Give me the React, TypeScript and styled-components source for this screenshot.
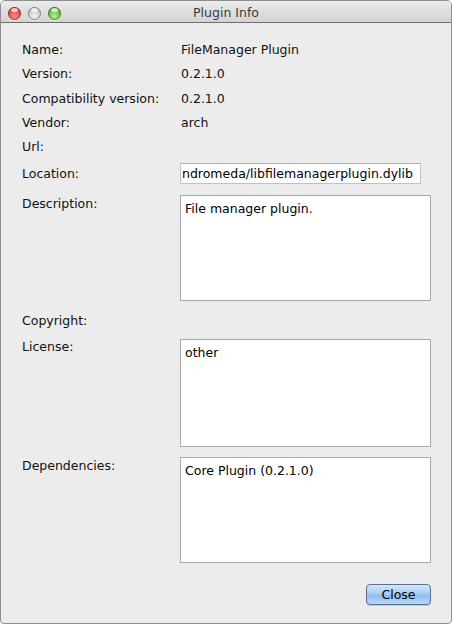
import React from "react";
import styled, { createGlobalStyle } from "styled-components";

const Global = createGlobalStyle`
  html, body { margin: 0; padding: 0; background: #ffffff; }
  body { font-family: "DejaVu Sans", "Liberation Sans", sans-serif; }
  * { box-sizing: border-box; }
`;

const Window = styled.div`
  width: 452px;
  height: 624px;
  border: 1px solid #8e8e8e;
  border-radius: 5px 5px 4px 4px;
  background: #ececec;
  overflow: hidden;
  display: flex;
  flex-direction: column;
`;

const TitleBar = styled.div`
  height: 22px;
  flex: none;
  background: linear-gradient(#ebebeb, #d3d3d3);
  border-bottom: 1px solid #6f6f6f;
  display: flex;
  align-items: center;
  position: relative;
  padding-left: 7px;
  gap: 7px;
`;

const Light = styled.span<{ $c: string; $d: string }>`
  width: 13px;
  height: 13px;
  border-radius: 50%;
  margin-top: 3px;
  background: radial-gradient(circle at 50% 70%, ${(p) => p.$c} 0%, ${(p) => p.$d} 75%);
  box-shadow: inset 0 0 0 1px rgba(0, 0, 0, 0.35), 0 1px 0 rgba(255, 255, 255, 0.6);
  position: relative;
  &::after {
    content: "";
    position: absolute;
    left: 3px;
    top: 1px;
    width: 7px;
    height: 4px;
    border-radius: 50%;
    background: rgba(255, 255, 255, 0.7);
  }
`;

const Title = styled.div`
  position: absolute;
  left: 0;
  right: 0;
  top: 0;
  bottom: 0;
  text-align: center;
  line-height: 24px;
  font-size: 12.5px;
  color: #3a3a3a;
  pointer-events: none;
`;

const Content = styled.div`
  padding: 15px 20px 0 20px;
  display: grid;
  grid-template-columns: 159px 251px;
  align-items: start;
  font-size: 12.5px;
  color: #111;
`;

const Label = styled.div<{ $h?: number; $mt?: number; $lh?: number }>`
  height: ${(p) => p.$h ?? 24.25}px;
  line-height: ${(p) => p.$lh ?? 24.25}px;
  margin-top: ${(p) => p.$mt ?? 0}px;
  padding-left: 1px;
  white-space: nowrap;
`;

const Value = styled.div<{ $mt?: number }>`
  height: 24.25px;
  line-height: 24.25px;
  margin-top: ${(p) => p.$mt ?? 0}px;
  padding-left: 1px;
  white-space: nowrap;
`;

const LineField = styled.div`
  height: 21px;
  width: 241px;
  margin-top: 4px;
  background: #fff;
  border: 1px solid #c2c2c2;
  border-top-color: #b0b0b0;
  line-height: 19px;
  padding-left: 1px;
  overflow: hidden;
  white-space: nowrap;
  color: #000;
`;

const Area = styled.div<{ $h: number; $mt: number }>`
  height: ${(p) => p.$h}px;
  margin-top: ${(p) => p.$mt}px;
  background: #fff;
  border: 1px solid #a9a9a9;
  padding: 4px 4px;
  line-height: 17px;
  color: #000;
`;

const Footer = styled.div`
  display: flex;
  justify-content: flex-end;
  padding: 21px 20px 0 0;
`;

const Button = styled.button`
  width: 65px;
  height: 21px;
  border-radius: 4px;
  border: 1px solid #5a6e93;
  background: linear-gradient(#d4e6f9 0%, #a9cdf4 45%, #8ebdf0 55%, #b7dafc 100%);
  box-shadow: 0 1px 1px rgba(0, 0, 0, 0.15);
  font-family: "DejaVu Sans", "Liberation Sans", sans-serif;
  font-size: 12.5px;
  color: #000;
  padding: 0;
  line-height: 19px;
`;

const simple: [string, string][] = [
  ["Name:", "FileManager Plugin"],
  ["Version:", "0.2.1.0"],
  ["Compatibility version:", "0.2.1.0"],
  ["Vendor:", "arch"],
  ["Url:", ""],
];

export default function App() {
  return (
    <>
      <Global />
      <Window>
        <TitleBar>
          <Light $c="#ff8d87" $d="#d9362e" />
          <Light $c="#f4f4f4" $d="#b9b9b9" />
          <Light $c="#b6f08f" $d="#4ca82d" />
          <Title>Plugin Info</Title>
        </TitleBar>
        <Content>
          {simple.map(([l, v]) => (
            <React.Fragment key={l}>
              <Label>{l}</Label>
              <Value>{v}</Value>
            </React.Fragment>
          ))}
          <Label $mt={4} $h={21} $lh={21}>Location:</Label>
          <LineField>ndromeda/libfilemanagerplugin.dylib</LineField>

          <Label $mt={11} $h={18} $lh={18}>Description:</Label>
          <Area $h={106} $mt={11}>File manager plugin.</Area>

          <Label $mt={8}>Copyright:</Label>
          <Value $mt={8}></Value>

          <Label $mt={5} $h={18} $lh={16}>License:</Label>
          <Area $h={108} $mt={5}>other</Area>

          <Label $mt={10} $h={18} $lh={18}>Dependencies:</Label>
          <Area $h={106} $mt={10}>Core Plugin (0.2.1.0)</Area>
        </Content>
        <Footer>
          <Button>Close</Button>
        </Footer>
      </Window>
    </>
  );
}
